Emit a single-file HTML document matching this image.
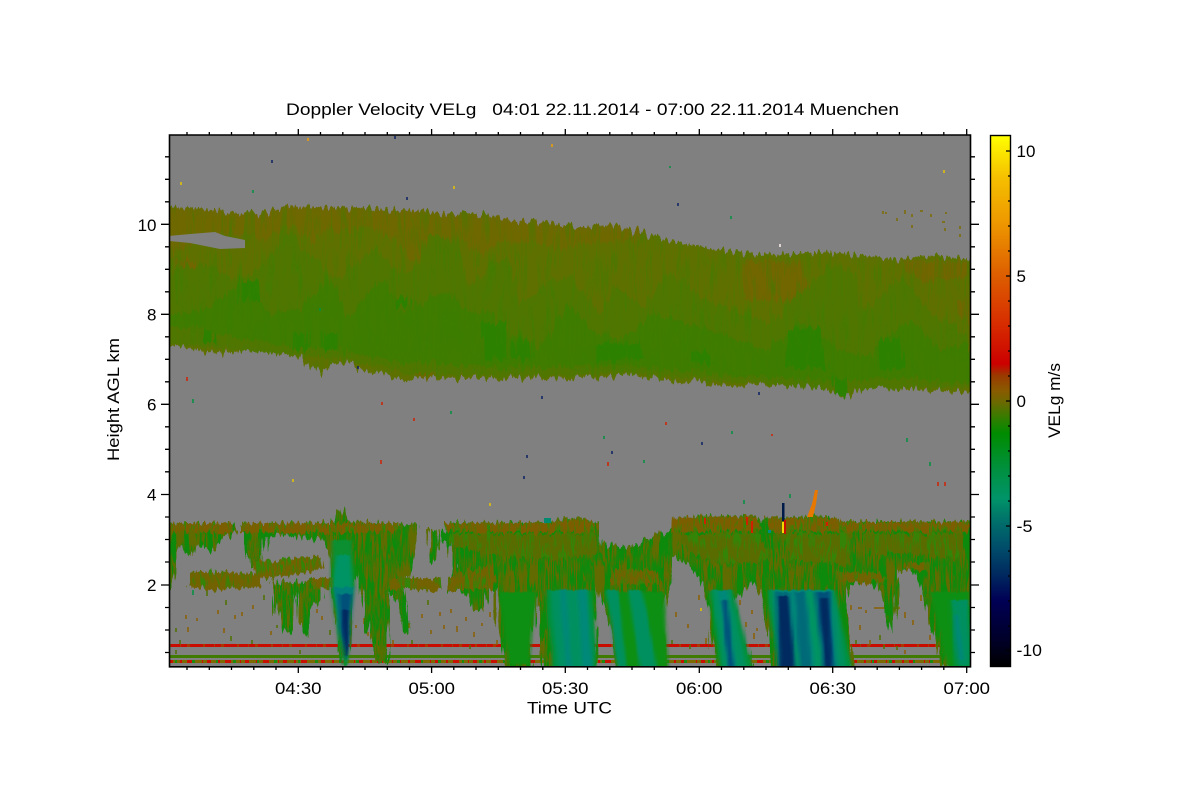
<!DOCTYPE html>
<html><head><meta charset="utf-8"><title>Doppler Velocity</title>
<style>html,body{margin:0;padding:0;background:#fff}svg{display:block}text{font-family:"Liberation Sans",Arial,sans-serif;font-size:17px;fill:#000}</style></head>
<body>
<svg width="1200" height="800" viewBox="0 0 1200 800" xmlns="http://www.w3.org/2000/svg">
<defs>
<clipPath id="pc"><rect x="170" y="136" width="800" height="530"/></clipPath>
<linearGradient id="cb" x1="0" y1="0" x2="0" y2="1">
<stop offset="0" stop-color="#ffff00"/><stop offset=".079" stop-color="#f5c000"/><stop offset=".16" stop-color="#ee9a00"/><stop offset=".267" stop-color="#dd5c00"/><stop offset=".348" stop-color="#d83000"/><stop offset=".43" stop-color="#cc0000"/><stop offset=".452" stop-color="#9a3a00"/><stop offset=".48" stop-color="#8a5a00"/><stop offset=".501" stop-color="#6e6800"/><stop offset=".527" stop-color="#3c7a00"/><stop offset=".561" stop-color="#008c00"/><stop offset=".63" stop-color="#009040"/><stop offset=".683" stop-color="#009468"/><stop offset=".734" stop-color="#006a6a"/><stop offset=".781" stop-color="#004a6a"/><stop offset=".828" stop-color="#00285f"/><stop offset=".876" stop-color="#000055"/><stop offset=".951" stop-color="#000028"/><stop offset="1" stop-color="#000000"/>
</linearGradient>
<filter id="jagU" filterUnits="userSpaceOnUse" x="150" y="180" width="840" height="240" color-interpolation-filters="sRGB">
<feTurbulence type="fractalNoise" baseFrequency="0.28 0.02" numOctaves="2" seed="5" result="n"/>
<feColorMatrix in="n" type="matrix" values="0 0 0 0 .22 0 0 0 0 .5 0 0 0 0 0 1.5 0 0 0 -.7" result="m"/>
<feComposite in="m" in2="SourceAlpha" operator="in" result="c"/>
<feMerge result="mg"><feMergeNode in="SourceGraphic"/><feMergeNode in="c"/></feMerge>
<feDisplacementMap in="mg" in2="n" scale="16" xChannelSelector="G" yChannelSelector="R"/>
</filter>
<filter id="texO" filterUnits="userSpaceOnUse" x="150" y="490" width="840" height="190" color-interpolation-filters="sRGB">
<feTurbulence type="fractalNoise" baseFrequency="0.3 0.025" numOctaves="2" seed="8" result="n"/>
<feColorMatrix in="n" type="matrix" values="0 0 0 0 .38 0 0 0 0 .42 0 0 0 0 0 6 0 0 0 -2.6" result="m"/>
<feComposite in="m" in2="SourceAlpha" operator="in" result="c"/>
<feMerge result="mg"><feMergeNode in="SourceGraphic"/><feMergeNode in="c"/></feMerge>
<feDisplacementMap in="mg" in2="n" scale="16" xChannelSelector="G" yChannelSelector="R"/>
</filter>
<filter id="texG" filterUnits="userSpaceOnUse" x="150" y="490" width="840" height="190" color-interpolation-filters="sRGB">
<feTurbulence type="fractalNoise" baseFrequency="0.32 0.04" numOctaves="2" seed="21" result="n"/>
<feColorMatrix in="n" type="matrix" values="0 0 0 0 .2 0 0 0 0 .52 0 0 0 0 .03 6 0 0 0 -3" result="m"/>
<feComposite in="m" in2="SourceAlpha" operator="in" result="c"/>
<feMerge result="mg"><feMergeNode in="SourceGraphic"/><feMergeNode in="c"/></feMerge>
<feDisplacementMap in="mg" in2="n" scale="12" xChannelSelector="G" yChannelSelector="R"/>
</filter>
<filter id="jagS" filterUnits="userSpaceOnUse" x="150" y="490" width="840" height="190" color-interpolation-filters="sRGB">
<feGaussianBlur in="SourceGraphic" stdDeviation="1.6 0.6" result="b"/>
<feTurbulence type="fractalNoise" baseFrequency="0.25 0.03" numOctaves="1" seed="2" result="n"/>
<feDisplacementMap in="b" in2="n" scale="4" xChannelSelector="R" yChannelSelector="G"/>
</filter>
</defs>

<rect width="1200" height="800" fill="#fff"/>
<rect x="169" y="135" width="801" height="532" fill="#808080"/>

<g clip-path="url(#pc)">
<!-- upper cloud -->
<g filter="url(#jagU)">
<path fill="#607000" d="M165 207L200 209 240 212 262 214 290 206 340 209 370 208 400 210 440 213 480 215 500 217 543 228 580 227 613 225 647 235 677 242 713 249 767 255 833 252 873 257 900 260 930 255 975 260V392L867 388 843 397 820 387 733 385 683 382 637 377 587 378 550 377 509 378 399 378 379 373 364 370 354 363 341 363 319 373 305 362 300 357 275 354 255 351 215 353 190 349 182 346 165 346Z"/>
<path fill="#6f6800" d="M165 207L262 214 290 206 400 210 500 217 580 227 613 225 647 235 640 240 600 242 580 244 560 250 540 243 500 241 480 255 462 240 430 236 415 262 395 240 370 226 345 232 325 228 312 245 296 226 280 230 262 240 235 232 200 238 165 258Z"/>
<path fill="#716600" d="M743 260L803 262 808 290 790 300 745 300ZM900 260L970 262 970 276 925 282 905 270ZM958 300L970 300 970 322 958 316ZM840 330L860 335 858 352 845 354ZM537 337L550 340 552 368 538 372ZM419 350L432 350 434 377 418 377ZM175 262L195 260 195 268 178 268ZM200 285L225 288 220 300 198 300Z"/>
<path fill="#507600" d="M165 273L202 263 236 280 262 267 282 243 292 230 302 250 322 263 336 280 356 263 376 247 396 273 416 267 432 233 456 243 472 287 489 267 509 257 520 303 567 273 600 313 617 287 643 307 670 270 700 297 733 310 773 323 783 307 833 263 857 273 863 313 900 277 933 313 970 340V386L840 390 640 374 500 376 420 374 350 360 169 344H165Z"/>
<path fill="#3f7c00" d="M165 313L199 313 246 280 266 313 299 310 329 277 349 317 382 277 402 313 446 290 469 313 492 310 500 337 520 333 540 350 567 303 593 330 620 340 653 313 700 327 767 350 800 323 840 350 867 357 910 317 940 350 970 343V382L900 378 860 380 820 380 760 378 700 372 640 368 560 366 500 368 430 362 399 362 340 350 280 345 200 330 165 325Z"/>
<path fill="#2c8200" d="M479 320L505 325 505 358 485 360ZM513 340L530 340 532 360 512 358ZM202 330L216 330 216 343 202 343ZM322 333L336 333 336 350 322 350ZM239 280L259 280 259 300 239 300ZM292 333L309 333 309 350 292 350ZM396 297L409 297 409 307 396 307ZM597 343L640 343 642 360 598 362ZM787 330L820 328 826 368 785 368ZM833 377L847 377 848 396 835 395ZM880 340L900 338 905 368 880 370ZM690 352L710 352 712 364 690 365Z"/>
</g>
<path fill="#808080" d="M169 236L190 234 215 232 225 236 245 240V248L220 249 205 246 190 243 169 241Z"/>

<!-- low-level lines -->
<rect x="169" y="644" width="801" height="3" fill="#c80c00"/>
<path d="M169 645.5H970" stroke="#a83a00" stroke-width="3" stroke-dasharray="2 9 1 6 3 13"/>
<rect x="169" y="655" width="801" height="3" fill="#3f7b00"/>
<rect x="169" y="660" width="801" height="3" fill="#7c6a00"/>
<path d="M169 661.5H970" stroke="#c81000" stroke-width="3" stroke-dasharray="4 7 2 5 6 9 1 4"/>
<path d="M175 661.5H970" stroke="#1b8a10" stroke-width="3" stroke-dasharray="2 15 3 21"/>

<!-- speckles -->
<path fill="none" stroke="#8a6000" stroke-width="1.5" d="M186 615v4M188 627v5M197 618v3M218 610v4M224 628v5M235 615v4M242 612v4M253 605v4M271 631v4M317 609v4M322 616v4M341 635v6M350 612v4M356 625v3M364 618v6M368 632v4M393 640v4M402 610v4M409 623v5M422 614v4M431 630v4M440 612v4M444 625v4M451 609v4M457 626v6M466 617v4M474 632v5M482 623v3M490 612v5M497 640v5M660 598v4M676 612v5M688 624v4M699 595v5M706 638v6M740 600v5M746 622v5M752 610v4M754 633v6M757 628v3M851 605v5M858 608h4M866 610v3M874 608h12M890 608h10M905 612v6M913 620v5M921 595v6M930 635v5M938 628v4M947 615v6M905 650v4M860 625v5M870 640v5"/>
<path fill="none" stroke="#4f7000" stroke-width="1.5" d="M176 628v4M180 640v4M207 590v6M226 600v5M231 636v5M252 640v4M264 595v5M277 625v3M330 630v5M412 640v4M428 600v5M470 645v4M737 610v6M741 640v4M672 640v4M690 645v4M856 640v4M880 635v5M884 645v4M940 650v4M897 646v4M176 650v4M300 650v4M380 650v4"/>
<path fill="none" stroke-width="1.5" d="M308 138v3M552 144v3" stroke="#f0a000"/>
<path fill="none" stroke-width="1.5" stroke="#0a2060" d="M272 160v3M395 136v3M407 197v3M358 366v3M527 455v3M524 476v3M612 451v3M678 203v3M267 567v2M702 442v3M542 396v3M759 392v3"/>
<path fill="none" stroke-width="1.5" stroke="#e8c400" d="M181 182v3M454 186v3M944 170v3M293 479v3M490 503v3M701 608v3"/>
<path fill="none" stroke-width="1.5" stroke="#009040" d="M253 190v3M731 216v3M193 399v4M451 411v3M604 436v3M644 460v3M732 431v3M907 438v4M930 462v4M790 494v4M744 500v4M670 166v2M320 308v3M193 590v5"/>
<path fill="none" stroke-width="1.5" stroke="#d02000" d="M187 377v4M381 460v4M938 482v4M945 482v4M772 434v2M608 462v4M666 422v3M382 402v3M414 418v3"/>
<path fill="none" stroke-width="1.5" stroke="#fff0f0" d="M780 244v3"/>
<path fill="none" stroke="#7c6a00" stroke-width="1.5" d="M883 211v3M885 213h2M905 210v4M912 214v3M897 218v3M912 225v3M920 211h3M931 214v3M945 228v3M945 213h2M960 234v3M960 226v3M942 222h3"/>

<!-- lower cloud silhouettes -->
<g filter="url(#texO)">
<path fill="#0d8a0c" d="M165 526H232L236 534 222 538 214 552 200 545 192 556 182 548 174 565 171 590H165Z"/>
<path fill="#0d8a0c" d="M242 526H282L290 533 268 536 262 562 252 568 245 545Z"/>
<path fill="#0d8a0c" d="M285 526L332 524 336 511 342 511 350 522 402 525 420 524 418 540 412 568 405 580 408 632 403 633 396 600 388 590 390 620 387 663 377 663 368 630 362 600 357 570 352 600 350 640 347 663 343 663 337 630 332 590 330 550 322 540 305 537 290 535Z"/>
<path fill="#0d8a0c" d="M427 530H438L436 560 430 563Z"/>
<path fill="#0d8a0c" d="M443 530L450 524 500 523 545 523 558 520 580 518 597 524 600 531 603 545 633 546 650 537 670 530 673 520 700 517 755 516 762 520 768 518 830 517 840 522H975V670H945L935 640 928 620 922 590 915 572 905 568 898 575 897 610 893 630 887 615 880 590 870 582 850 582 845 600 855 670H772L770 640 763 600 755 580 745 590 733 600 737 630 755 670H717L708 620 705 590 700 578 690 565 672 556 668 590 660 620 670 670H620L610 630 602 600 595 590 596 670H545L540 630 535 600 530 640 532 670H507L498 625 496 590 490 590 482 610 475 612 470 600 460 590 447 590 455 570 448 548 443 535Z"/>
<path fill="#0d8a0c" d="M270 584L325 580 322 600 310 608 306 637 300 625 296 590 293 632 282 630 275 610Z"/>
</g>
<!-- brown bands -->
<g filter="url(#texG)">
<path fill="#7c5e00" d="M165 523H232V532H165ZM242 523H282L400 523V531L362 533 320 532H242ZM445 523L545 523 580 518 597 524V532L445 532ZM673 517L755 516 762 530 672 532ZM765 517L835 517 842 522H975V531L770 532Z"/>
<path fill="#736200" d="M255 562L300 558 322 556 324 568 300 574 270 578 256 576ZM190 572L225 572 260 574 262 586 215 590 190 586ZM310 578L345 578 345 588 312 590ZM387 578L440 578 441 590 388 590ZM447 578L470 570 490 564 497 580 493 590 447 590ZM610 570L655 570 662 585 610 585ZM835 572L880 573 890 582 840 582ZM905 562L930 564 930 572 905 568Z"/>
<path fill="#5a6c00" d="M450 534L597 534 600 552 560 560 500 556 450 545ZM680 534L760 534 770 560 720 565 690 552ZM780 534L850 534 850 565 790 560ZM860 534L965 534 960 560 900 552 870 556Z"/>
</g>

<!-- rain shafts with teal cores -->
<g filter="url(#jagS)">
<path fill="#0d8f14" d="M499 592H536L529 664H509ZM546 592H594L596 667H552ZM604 592H664L668 667H622ZM709 592H733L752 667H719ZM766 592H836L852 667H777ZM930 592H970V667H947Z"/>
<path fill="#009040" d="M546 590H592L596 667H552ZM710 590H733L752 667H720ZM768 590H835L852 667H777ZM950 600H970V667H955Z"/>
<path fill="#009060" d="M551 590H588L594 667H557ZM606 590H618L626 667H618ZM628 590H642L657 667H640ZM712 590H730L746 667H723ZM770 590H834L846 667H778ZM952 600H968L970 665H958Z"/>
<path fill="#008878" d="M560 590H566L572 667H565ZM578 590H586L592 667H582ZM718 590H727L737 667H727ZM774 590H832L838 667H779ZM953 615H958L964 660H958Z"/>
<path fill="#009462" d="M806 592H818L826 667H815ZM788 640H796L800 667H792Z"/>
<path fill="#006a78" d="M795 592H805L811 667H800ZM814 592H831L835 667H822ZM775 592H790L796 667H777Z"/>
<path fill="#00507a" d="M722 600H727L734 667H728ZM817 592H829L834 667H825Z"/>
<path fill="#002a60" d="M778 596H788L794 667H780ZM820 598H828L831 667H825Z"/>
</g>
<g filter="url(#jagS)">
<path fill="#0b8f30" d="M332 540H352L355 587 350 630 348 665H343L336 625 331 590Z"/>
<path fill="#009464" d="M336 555H350L352 587H333Z"/>
<path fill="#00807a" d="M333 587H354L350 640 346 662 339 630Z"/>
<path fill="#00507a" d="M339 594H352L349 645 345 660 340 628Z"/>
<path fill="#002a60" d="M342 610H350L347 655 344 655Z"/>
</g>

<!-- storm spike -->
<rect x="782" y="503" width="2.5" height="18" fill="#001a4a"/>
<rect x="782" y="522" width="2.5" height="11" fill="#f0d800"/>
<rect x="784" y="520" width="2" height="14" fill="#c81000"/>
<path d="M807 517L812 504 815 490 818 490 816 504 813 517Z" fill="#e87800"/>
<rect x="768" y="530" width="3" height="3" fill="#008a80"/>
<rect x="544" y="518" width="7" height="5" fill="#008a70"/>
<path stroke="#d02000" stroke-width="2" fill="none" d="M747 517v8M705 518v6M752 521v12M827 522v4"/>
</g>

<!-- axes -->
<path fill="none" stroke="#000" stroke-width="1.6" d="M169.5 135H970.5V666.8H169.5Z"/>
<path fill="none" stroke="#000" stroke-width="1.3" d="M298.3 129V135M431.6 129V135M565.3 129V135M699.3 129V135M832.7 129V135M966.7 129V135M298.3 667V673M431.6 667V673M565.3 667V673M699.3 667V673M832.7 667V673M966.7 667V673
M187 132V135M209.3 132V135M231.5 132V135M253.8 132V135M276 132V135M320.5 132V135M342.8 132V135M365 132V135M387.3 132V135M409.5 132V135M453.8 132V135M476 132V135M498.3 132V135M520.5 132V135M542.8 132V135M587.5 132V135M609.8 132V135M632 132V135M654.3 132V135M676.5 132V135M721.5 132V135M743.8 132V135M766 132V135M788.3 132V135M810.5 132V135M855 132V135M877.2 132V135M899.4 132V135M921.6 132V135M943.8 132V135
M187 667V670M209.3 667V670M231.5 667V670M253.8 667V670M276 667V670M320.5 667V670M342.8 667V670M365 667V670M387.3 667V670M409.5 667V670M453.8 667V670M476 667V670M498.3 667V670M520.5 667V670M542.8 667V670M587.5 667V670M609.8 667V670M632 667V670M654.3 667V670M676.5 667V670M721.5 667V670M743.8 667V670M766 667V670M788.3 667V670M810.5 667V670M855 667V670M877.2 667V670M899.4 667V670M921.6 667V670M943.8 667V670
M161 224.3H169M161 314.3H169M161 404.3H169M161 494.5H169M161 585H169M970 224.3H979M970 314.3H979M970 404.3H979M970 494.5H979M970 585H979
M165 156.8H169M165 179.3H169M165 201.8H169M165 246.8H169M165 269.3H169M165 291.8H169M165 336.8H169M165 359.3H169M165 381.8H169M165 426.8H169M165 449.3H169M165 471.8H169M165 517H169M165 539.5H169M165 562H169M165 607.5H169M165 630H169M165 652.5H169
M970 156.8H975M970 179.3H975M970 201.8H975M970 246.8H975M970 269.3H975M970 291.8H975M970 336.8H975M970 359.3H975M970 381.8H975M970 426.8H975M970 449.3H975M970 471.8H975M970 517H975M970 539.5H975M970 562H975M970 607.5H975M970 630H975M970 652.5H975"/>

<!-- colour bar -->
<rect x="990.5" y="135.5" width="20" height="531" fill="url(#cb)" stroke="#000" stroke-width="1.4"/>
<path fill="none" stroke="#000" stroke-width="1.3" d="M1006 151H1010M1008 176H1010M1008 201H1010M1008 226H1010M1008 251H1010M1006 276H1010M1008 301H1010M1008 326H1010M1008 351H1010M1008 376H1010M1006 401H1010M1008 426H1010M1008 451H1010M1008 476H1010M1008 501H1010M1006 526H1010M1008 551H1010M1008 576H1010M1008 601H1010M1008 626H1010M1006 650H1010"/>

<!-- text -->
<text x="286" y="115" textLength="613" lengthAdjust="spacingAndGlyphs" xml:space="preserve">Doppler Velocity VELg   04:01 22.11.2014 - 07:00 22.11.2014 Muenchen</text>
<text x="156.5" y="231" text-anchor="end">10</text>
<text x="156.5" y="320.5" text-anchor="end">8</text>
<text x="156.5" y="410.5" text-anchor="end">6</text>
<text x="156.5" y="500.5" text-anchor="end">4</text>
<text x="156.5" y="591" text-anchor="end">2</text>
<text x="275" y="694" textLength="46.5" lengthAdjust="spacingAndGlyphs">04:30</text>
<text x="408.5" y="694" textLength="46.5" lengthAdjust="spacingAndGlyphs">05:00</text>
<text x="542" y="694" textLength="46.5" lengthAdjust="spacingAndGlyphs">05:30</text>
<text x="676" y="694" textLength="46.5" lengthAdjust="spacingAndGlyphs">06:00</text>
<text x="809.5" y="694" textLength="46.5" lengthAdjust="spacingAndGlyphs">06:30</text>
<text x="943.5" y="694" textLength="46.5" lengthAdjust="spacingAndGlyphs">07:00</text>
<text x="527" y="713.5" textLength="85" lengthAdjust="spacingAndGlyphs">Time UTC</text>
<text transform="translate(119 461) rotate(-90)" textLength="123" lengthAdjust="spacingAndGlyphs">Height AGL km</text>
<text transform="translate(1060 438) rotate(-90)" textLength="75" lengthAdjust="spacingAndGlyphs">VELg m/s</text>
<text x="1016.5" y="157">10</text>
<text x="1016.5" y="282">5</text>
<text x="1016.5" y="407">0</text>
<text x="1016.5" y="532" textLength="16" lengthAdjust="spacingAndGlyphs">-5</text>
<text x="1016.5" y="656" textLength="25.5" lengthAdjust="spacingAndGlyphs">-10</text>
</svg>
</body></html>
